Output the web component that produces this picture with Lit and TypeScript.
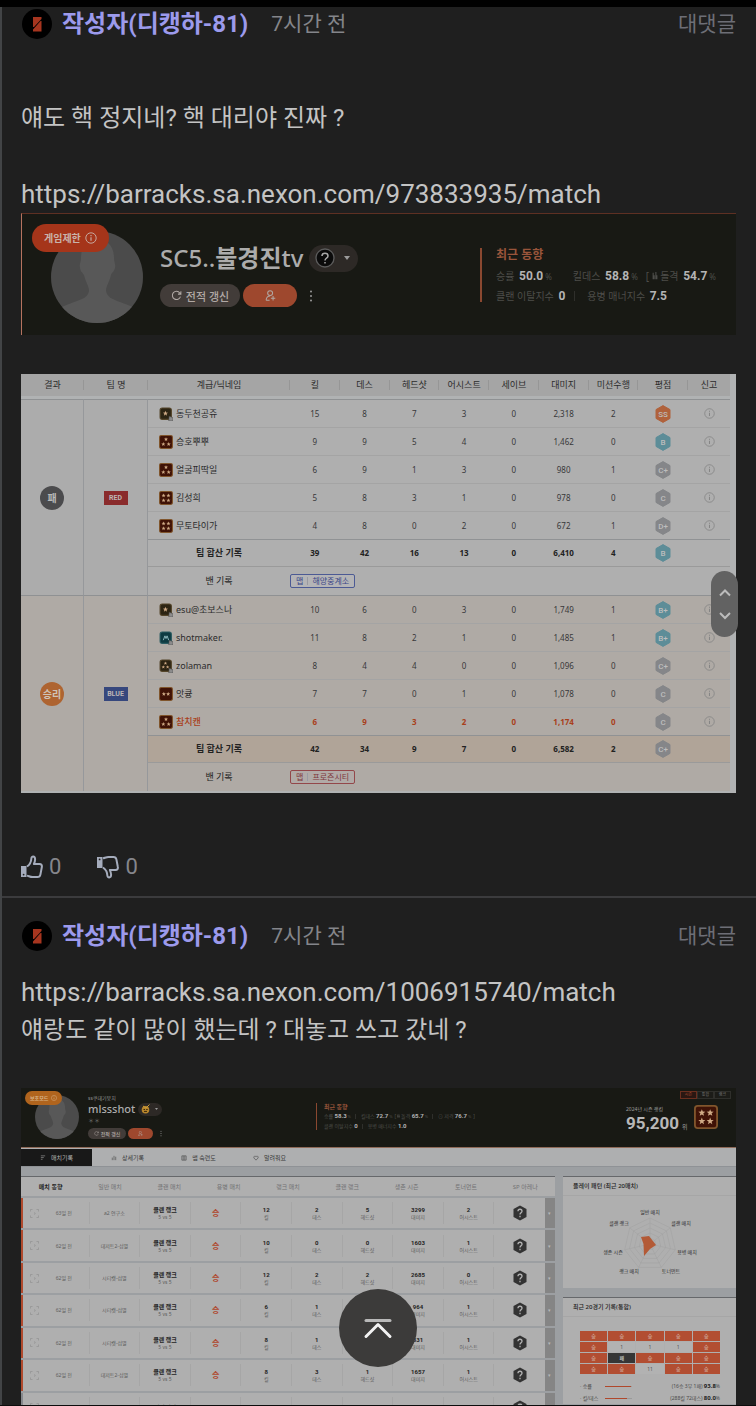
import { LitElement, html, svg, css, nothing } from "lit";
import { customElement, property } from "lit/decorators.js";
import { classMap } from "lit/directives/class-map.js";

/* ---------- shared icons ---------- */

const infoIcon = (cls = "info") => html`
  <svg class=${cls} viewBox="0 0 12 12" fill="none" stroke="currentColor" aria-hidden="true">
    <circle cx="6" cy="6" r="5.2" stroke-width="0.9" />
    <path d="M6 5.2V8.8M6 3.1V4.2" stroke-width="1.1" />
  </svg>`;

const personAvatar = (cls: string) => html`
  <svg class=${cls} viewBox="0 0 92 92" aria-hidden="true">
    <defs><clipPath id="disc"><circle cx="46" cy="46" r="46" /></clipPath></defs>
    <circle cx="46" cy="46" r="46" fill="#4b4b4b" />
    <g clip-path="url(#disc)" fill="#585858">
      <path d="M30 27C30 14 37 8 46 8S63 14 63 27C63 32 65 33 64 37 63 41 61 41 60 44 58 52 55 55 55 60 56 66 61 68 69 71 80 75 86 77 90 84V96H2V84C6 77 13 75 23 71 32 68 37 66 38 60 38 55 35 52 33 44 31 41 29 40 29 36 28 33 30 32 30 27Z" />
    </g>
  </svg>`;

const refreshIcon = html`
  <svg class="ico" viewBox="0 0 12 12" fill="none" stroke="currentColor" stroke-width="1.1" aria-hidden="true">
    <path d="M10.3 7.2A4.5 4.5 0 1 1 9.6 3.2L10.6 4.4M10.8 1.4V4.5H7.6" />
  </svg>`;

const addUserIcon = html`
  <svg class="ico" viewBox="0 0 12 12" fill="none" stroke="currentColor" stroke-width="1.1" aria-hidden="true">
    <circle cx="5.6" cy="3.4" r="2.7" />
    <path d="M1.2 11.2C1.4 8.2 3 6.6 5.6 6.6M1.2 11.2H5M8.8 6.6V11.4M6.4 9H11.2" />
  </svg>`;

const dotsIcon = html`
  <svg class="dots" viewBox="0 0 4 12" fill="currentColor" aria-hidden="true">
    <circle cx="2" cy="1.4" r="1" /><circle cx="2" cy="6" r="1" /><circle cx="2" cy="10.6" r="1" />
  </svg>`;

const star = (x: number, y: number, r: number) => {
  const pts: string[] = [];
  for (let i = 0; i < 10; i++) {
    const a = -Math.PI / 2 + (i * Math.PI) / 5;
    const d = i % 2 ? r * 0.42 : r;
    pts.push(`${(x + d * Math.cos(a)).toFixed(2)},${(y + d * Math.sin(a)).toFixed(2)}`);
  }
  return svg`<polygon points=${pts.join(" ")} fill="#d0ab86" />`;
};

const STARS: Record<number, [number, number][]> = {
  2: [[9, 13], [17, 13]],
  3: [[13, 8], [8, 17], [18, 17]],
  4: [[8.5, 8.5], [17.5, 8.5], [8.5, 17.5], [17.5, 17.5]],
};

const rankIcon = (kind: string) => {
  const n = Number(kind);
  if (n) {
    return html`<svg class="rank" viewBox="0 0 26 26" aria-hidden="true">
      <rect x="1" y="1" width="24" height="24" rx="3" fill="#3f1206" stroke="#80552c" stroke-width="2" />
      ${STARS[n].map(([x, y]) => star(x, y, 4))}
    </svg>`;
  }
  const teal = kind === "teal";
  return html`<svg class="rank" viewBox="0 0 26 26" aria-hidden="true">
    <rect x="2" y="2" width="21" height="21" rx="4" fill=${teal ? "#0e3b42" : "#2c2413"} stroke=${teal ? "#2b5c62" : "#54452a"} stroke-width="2" />
    ${teal
      ? svg`<path d="M8 17L11 9L13 14L15 9L18 17" fill="none" stroke="#9cc7cc" stroke-width="1.6"/>`
      : kind === "gold3"
        ? [star(12, 8, 3.5), star(8, 15, 3.5), star(16, 15, 3.5)]
        : star(12, 12, 5)}
    <path d="M19 17L26 20V26H18Z" fill="#8b8b8b" stroke="#4c4c4c" stroke-width="1" />
  </svg>`;
};

const GRADE_COLOR: Record<string, string> = { S: "#b0623c", B: "#5d8d98", C: "#858689", D: "#858689" };

const gradeIcon = (g: string) => html`
  <svg class="grade" viewBox="0 0 16 18" role="img" aria-label=${g}>
    <path d="M8 0.6L15 4.6V13.4L8 17.4L1 13.4V4.6Z" fill=${GRADE_COLOR[g[0]]} stroke=${GRADE_COLOR[g[0]]} stroke-linejoin="round" />
    <text x="8" y="12" text-anchor="middle" class="grade-text">${g}</text>
  </svg>`;

/* ---------- scoreboard ---------- */

type Player = { rank: string; name: string; v: string[]; grade: string; me?: boolean };
type Team = { cls: string; result: string; team: string; players: Player[]; sum: string[]; sumGrade: string; map: string };

const TEAMS: Team[] = [
  {
    cls: "red", result: "패", team: "RED", map: "해양중계소",
    players: [
      { rank: "gold", name: "동두천공쥬", v: ["15", "8", "7", "3", "0", "2,318", "2"], grade: "SS" },
      { rank: "3", name: "승호뿌뿌", v: ["9", "9", "5", "4", "0", "1,462", "0"], grade: "B" },
      { rank: "3", name: "얼굴피딱일", v: ["6", "9", "1", "3", "0", "980", "1"], grade: "C+" },
      { rank: "4", name: "김성희", v: ["5", "8", "3", "1", "0", "978", "0"], grade: "C" },
      { rank: "4", name: "무토타이가", v: ["4", "8", "0", "2", "0", "672", "1"], grade: "D+" },
    ],
    sum: ["39", "42", "16", "13", "0", "6,410", "4"], sumGrade: "B",
  },
  {
    cls: "blue", result: "승리", team: "BLUE", map: "프로즌시티",
    players: [
      { rank: "gold", name: "esu@초보스나", v: ["10", "6", "0", "3", "0", "1,749", "1"], grade: "B+" },
      { rank: "teal", name: "shotmaker.", v: ["11", "8", "2", "1", "0", "1,485", "1"], grade: "B+" },
      { rank: "gold3", name: "zolaman", v: ["8", "4", "4", "0", "0", "1,096", "0"], grade: "C+" },
      { rank: "2", name: "앗큥", v: ["7", "7", "0", "1", "0", "1,078", "0"], grade: "C" },
      { rank: "3", name: "참치캔", v: ["6", "9", "3", "2", "0", "1,174", "0"], grade: "C", me: true },
    ],
    sum: ["42", "34", "9", "7", "0", "6,582", "2"], sumGrade: "C+",
  },
];

const HEADS = ["결과", "팀 명", "계급/닉네임", "킬", "데스", "헤드샷", "어시스트", "세이브", "대미지", "미션수행", "평점", "신고"];

@customElement("score-board")
export class ScoreBoard extends LitElement {
  static styles = css`
    :host { display: block; background: #b0b2b3; padding: 0 6px 2px 0; font: 8px/12px "Noto Sans", "Noto Sans CJK KR", sans-serif; color: #38383a; }
    table { width: 100%; table-layout: fixed; border-collapse: separate; border-spacing: 0; }
    .c-result { width: 63px; }
    .c-team { width: 64px; }
    .c-name { width: 142px; }
    .c-report { width: 42px; }
    th, td { padding: 0; box-sizing: border-box; text-align: center; vertical-align: middle; }
    th { height: 25px; border-bottom: 3px solid #b0b2b3; font-weight: 400; font-size: 9px; color: #2c2c2c; background: linear-gradient(#969696, #969696) right center / 1px 10px no-repeat, #a5a5a5; white-space: nowrap; }
    th:last-child { background: #a5a5a5; }
    td { height: 28px; border-top: 1px solid #a4a4a4; }
    tr.first td { border-top-color: #8f9193; }
    tbody.red { background: #afafaf; }
    tbody.blue { background: #afaaa5; }
    tbody.red .side { background: #acacac; }
    .side { border-right: 1px solid #96989b; }
    tr.sum td { border-top-color: #909294; border-bottom: 1px solid #9a9a9a; font-weight: 700; color: #222; }
    tbody.blue tr.sum td { background: #b0a498; }
    .sum-label, .ban-label { font-size: 9px; }
    tr.ban td { border-top: 0; }
    .ban-label { color: #1f1f1f; }
    .nick { display: flex; align-items: center; gap: 3px; padding-left: 11px; font-size: 9px; color: #2c2c2c; }
    .rank { width: 14px; height: 14px; }
    .grade { width: 16px; height: 18px; display: block; margin: 0 auto; }
    .grade-text { font: 500 8px/1 "Roboto", sans-serif; fill: #bdbdbd; }
    .result { display: flex; align-items: center; justify-content: center; width: 24px; height: 24px; margin: 0 auto; border-radius: 50%; color: #b9b9b9; font-size: 10px; font-weight: 700; background: #4b4b4d; }
    .blue .result { background: #ae6431; color: #cfc3b8; }
    .team { display: block; width: 24px; margin: 0 auto; font: 700 7px/14px "Roboto", sans-serif; color: #bdb5b5; background: #8a2b2c; }
    .blue .team { background: #36477d; }
    .map { display: inline-flex; gap: 4px; align-items: center; border: 1px solid #4c5a94; border-radius: 2px; padding: 0 5px; line-height: 12px; color: #3b4788; background: #b4b4b6; }
    .map span + span { border-left: 1px solid #9a9aa2; padding-left: 4px; line-height: 8px; }
    .blue .map { border-color: #93474a; color: #7e363b; background: #b1aaa7; }
    .ban-map { text-align: left; }
    .me td { color: #a93f1b; font-weight: 700; }
    .me .nick { font-weight: 500; color: inherit; }
    .report { border: 0; padding: 0; background: none; color: #858585; display: block; margin: 0 auto; height: 12px; }
    .info { width: 11px; height: 11px; display: block; }
  `;

  render() {
    return html`<table>
      <colgroup>
        <col class="c-result" /><col class="c-team" /><col class="c-name" />
        ${Array.from({ length: 8 }, () => html`<col />`)}<col class="c-report" />
      </colgroup>
      <thead><tr>${HEADS.map((h) => html`<th scope="col">${h}</th>`)}</tr></thead>
      ${TEAMS.map((t) => html`
        <tbody class=${t.cls}>
          ${t.players.map((p, i) => html`
            <tr class=${classMap({ first: i === 0, me: !!p.me })}>
              ${i === 0
                ? html`<td class="side" rowspan="7"><span class="result">${t.result}</span></td>
                    <td class="side" rowspan="7"><span class="team">${t.team}</span></td>`
                : nothing}
              <td><span class="nick">${rankIcon(p.rank)}${p.name}</span></td>
              ${p.v.map((x) => html`<td>${x}</td>`)}
              <td>${gradeIcon(p.grade)}</td>
              <td><button class="report" aria-label="신고">${infoIcon()}</button></td>
            </tr>`)}
          <tr class="sum">
            <td class="sum-label">팀 합산 기록</td>
            ${t.sum.map((x) => html`<td>${x}</td>`)}
            <td>${gradeIcon(t.sumGrade)}</td><td></td>
          </tr>
          <tr class="ban">
            <td class="ban-label">밴 기록</td>
            <td class="ban-map" colspan="9"><span class="map"><span>맵</span><span>${t.map}</span></span></td>
          </tr>
        </tbody>`)}
    </table>`;
  }
}

/* ---------- profile banner ---------- */

const stat = (label: unknown, value: string, unit = "") =>
  html`<span class="stat">${label} <b>${value}</b>${unit ? html`<i>${unit}</i>` : nothing}</span>`;
const bar = html`<span class="sep"></span>`;
const gunIcon = html`<svg class="gun" viewBox="0 0 6 10" fill="currentColor" aria-hidden="true"><path d="M0 1H1.4V4H2.6V9H0ZM3.4 0H4.8V4H6V9H3.4Z" /></svg>`;

@customElement("profile-banner")
export class ProfileBanner extends LitElement {
  @property({ type: Boolean, reflect: true }) compact = false;

  static styles = css`
    :host { display: block; font-family: "Noto Sans", "Noto Sans CJK KR", sans-serif; }
    button { border: 0; padding: 0; margin: 0; font-family: inherit; cursor: pointer; }
    .banner { display: flex; box-sizing: border-box; height: 122px; background: #181914; border-top: 1px solid #5e3023; border-left: 1px solid #b5735f; }
    .portrait { position: relative; flex: none; width: 138px; padding: 17px 0 0 29px; box-sizing: border-box; }
    .avatar { width: 92px; height: 92px; display: block; }
    .badge { position: absolute; left: 10px; top: 10px; height: 28px; padding: 0 12px; display: flex; align-items: center; gap: 4px; border-radius: 14px; background: #a5351a; color: #c9b3ab; font-size: 10px; font-weight: 700; white-space: nowrap; }
    .info { width: 12px; height: 12px; }
    .who { padding-top: 27px; flex: 1; min-width: 0; }
    .name-row { display: flex; align-items: center; gap: 6px; height: 34px; }
    .name { margin: 0; font-size: 24px; line-height: 34px; font-weight: 500; color: #acacac; white-space: nowrap; }
    .name b { font-weight: 700; }
    .tier { display: flex; align-items: center; justify-content: space-between; width: 49px; height: 27px; box-sizing: border-box; padding: 0 8px 0 6px; border-radius: 14px; background: #2d2926; color: #9b9b9b; }
    .tier-icon { width: 20px; height: 20px; }
    .caret { width: 6px; height: 4px; }
    .actions { display: flex; align-items: center; gap: 3px; padding-top: 9px; }
    .refresh, .add { display: flex; align-items: center; justify-content: center; gap: 4px; height: 23px; border-radius: 12px; color: #b1a9a5; }
    .refresh { width: 80px; background: #423c39; font-size: 11px; font-weight: 500; white-space: nowrap; }
    .add { width: 54px; background: #9e482e; }
    .ico { width: 11px; height: 11px; }
    .more { background: none; color: #9a9a9a; padding: 0 0 0 9px; height: 14px; }
    .dots { width: 4px; height: 12px; display: block; }
    .trend { align-self: flex-start; box-sizing: border-box; flex: none; width: 256px; height: 54px; margin-top: 34px; border-left: 2px solid #8a4830; padding-left: 14px; color: #4d4d49; font-size: 10px; line-height: 20px; white-space: nowrap; }
    .trend h3 { margin: 1px 0 5px; font-size: 12px; line-height: 12px; font-weight: 700; color: #99553b; }
    .line { display: flex; align-items: center; height: 20px; }
    .stat b { font: 700 12px/20px "Roboto", sans-serif; color: #b4b4b4; margin-left: 2px; }
    .stat i { font-style: normal; font-size: 8px; margin-left: 2px; }
    .sep { width: 1px; height: 10px; margin: 0 12px 0 9px; background: #2f2f2b; }
    .open { margin: 0 3px 0 8px; }
    .gun { flex: none; width: 6px; height: 8px; margin-right: 2px; }
    .season, .clan, .sub { display: none; }

    :host([compact]) .banner { height: 60px; border: 0; border-bottom: 1px solid #8f6a58; }
    :host([compact]) .portrait { width: 67px; padding: 7px 0 0 14px; }
    :host([compact]) .avatar { width: 44px; height: 44px; }
    :host([compact]) .badge { left: 4px; top: 3px; height: 14px; padding: 0 5px; gap: 3px; border-radius: 7px; background: #b0641d; font-size: 5px; color: #d8b48b; }
    :host([compact]) .info { width: 6px; height: 6px; }
    :host([compact]) .who { padding-top: 6px; }
    :host([compact]) .clan { display: block; font-size: 5px; line-height: 8px; color: #929292; }
    :host([compact]) .sub { display: block; font-size: 6px; line-height: 10px; color: #6b6b68; }
    :host([compact]) .name-row { height: 14px; gap: 3px; }
    :host([compact]) .name { font-size: 11px; line-height: 14px; }
    :host([compact]) .tier { width: 24px; height: 13px; padding: 0 4px 0 3px; }
    :host([compact]) .tier-icon { width: 10px; height: 10px; }
    :host([compact]) .caret { width: 3px; height: 2px; }
    :host([compact]) .actions { padding-top: 2px; gap: 2px; }
    :host([compact]) .refresh, :host([compact]) .add { height: 11px; gap: 2px; border-radius: 6px; }
    :host([compact]) .refresh { width: 38px; font-size: 5px; }
    :host([compact]) .add { width: 25px; }
    :host([compact]) .ico { width: 5px; height: 5px; }
    :host([compact]) .more { padding-left: 5px; height: 7px; }
    :host([compact]) .dots { width: 2px; height: 7px; }
    :host([compact]) .trend { width: 310px; height: 27px; margin-top: 15px; padding-left: 7px; border-left-width: 1px; font-size: 5px; line-height: 10px; }
    :host([compact]) .trend h3 { font-size: 6px; line-height: 8px; margin: 0; }
    :host([compact]) .line { height: 10px; }
    :host([compact]) .stat b { font-size: 6px; line-height: 10px; margin-left: 0; }
    :host([compact]) .stat i { font-size: 4px; margin-left: 1px; }
    :host([compact]) .sep { height: 5px; margin: 0 5px 0 4px; }
    :host([compact]) .open { margin: 0 1px 0 2px; }
    :host([compact]) .gun { width: 3px; height: 4px; margin-right: 1px; }
    :host([compact]) .season { display: grid; grid-template-columns: 60px 24px; column-gap: 8px; align-content: start; flex: none; width: 110px; box-sizing: border-box; padding: 3px 6px 0 0; color: #9c9c9c; }
    .modes { grid-column: 1 / -1; display: flex; margin: 0 0 6px 54px; }
    .modes button { flex: none; width: 17px; height: 8px; box-sizing: border-box; border: 1px solid #2f2f2b; background: #1c1c18; color: #777; font-size: 4px; line-height: 6px; }
    .modes .on { border-color: #6a2f1f; color: #a8492d; background: #2a1712; }
    .season-label { font-size: 5px; line-height: 8px; }
    .season-rank { display: flex; align-items: baseline; gap: 3px; font-size: 6px; line-height: 20px; }
    .season-rank b { font: 700 17px/20px "Roboto", sans-serif; color: #b8b8b8; }
    .rank { grid-column: 2; grid-row: 2 / span 2; width: 24px; height: 24px; }
  `;

  render() {
    const c = this.compact;
    return html`
      <div class="banner">
        <div class="portrait">
          ${personAvatar("avatar")}
          <span class="badge">${c ? "보호모드" : "게임제한"}${infoIcon()}</span>
        </div>
        <div class="who">
          ${c ? html`<div class="clan">ss쿠데기뭉치</div>` : nothing}
          <div class="name-row">
            <h2 class="name">${c ? "mlssshot" : html`SC5..<b>불경진</b>tv`}</h2>
            <button class="tier" aria-label="계급">
              ${c
                ? html`<svg class="tier-icon" viewBox="0 0 10 10"><circle cx="4.5" cy="5.8" r="3.8" fill="#b8862c" /><path d="M2 2L5 4L8.5 0.5" stroke="#c99c3c" fill="none" /><path d="M2.5 5.5H4M5.2 5.5H6.7M3 7.4H6" stroke="#2a1d08" stroke-width="0.9" /></svg>`
                : html`<svg class="tier-icon" viewBox="0 0 20 20"><circle cx="10" cy="10" r="9" fill="#0b0b0b" stroke="#5c5c5c" stroke-width="1.3" /><path d="M7 8C7 4.4 13 4.4 13 8C13 10.2 10 10 10 12.4M10 14V15.6" fill="none" stroke="#a8a8a8" stroke-width="1.5" /></svg>`}
              <svg class="caret" viewBox="0 0 6 4" fill="currentColor"><path d="M0 0H6L3 4Z" /></svg>
            </button>
          </div>
          ${c ? html`<div class="sub">＊＊</div>` : nothing}
          <div class="actions">
            <button class="refresh">${refreshIcon}전적 갱신</button>
            <button class="add" aria-label="친구 추가">${addUserIcon}</button>
            <button class="more" aria-label="더보기">${dotsIcon}</button>
          </div>
        </div>
        <section class="trend">
          <h3>최근 동향</h3>
          ${c
            ? html`<div class="line">${stat("승률", "58.3", "%")}${bar}${stat("킬데스", "72.7", "%")}<span class="open">[</span>${gunIcon}${stat("돌격", "65.7", "%")}${bar}${stat("⊙ 저격", "76.7", "%")}<span class="open">]</span></div>
                <div class="line">${stat("클랜 이탈지수", "0")}${bar}${stat("용병 매너지수", "1.0")}</div>`
            : html`<div class="line">${stat("승률", "50.0", "%")}${bar}${stat("킬데스", "58.8", "%")}<span class="open">[</span>${gunIcon}${stat("돌격", "54.7", "%")}${bar}</div>
                <div class="line">${stat("클랜 이탈지수", "0")}${bar}${stat("용병 매너지수", "7.5")}</div>`}
        </section>
        ${c
          ? html`<div class="season">
              <div class="modes"><button class="on">시즌</button><button>통합</button><button>랭크</button></div>
              <span class="season-label">2024년 시즌 랭킹</span>
              <span class="season-rank"><b>95,200</b>위</span>
              ${rankIcon("4")}
            </div>`
          : nothing}
      </div>`;
  }
}

/* ---------- match history ---------- */

type Match = [string, string, string, string, string, string, string, string, string, string];
const MATCHES: Match[] = [
  ["63일 전", "a2 연구소", "클랜 랭크", "5 vs 5", "승", "12", "2", "5", "3299", "2"],
  ["62일 전", "데저트2-섬멸", "클랜 랭크", "5 vs 5", "승", "10", "0", "0", "1603", "1"],
  ["62일 전", "시티캣-섬멸", "클랜 랭크", "5 vs 5", "승", "12", "2", "2", "2685", "0"],
  ["62일 전", "시티캣-섬멸", "클랜 랭크", "5 vs 5", "승", "6", "1", "2", "964", "1"],
  ["62일 전", "시티캣-섬멸", "클랜 랭크", "5 vs 5", "승", "8", "1", "3", "831", "1"],
  ["62일 전", "데저트2-섬멸", "클랜 랭크", "5 vs 5", "승", "8", "3", "1", "1657", "1"],
  ["", "", "일반매치", "", "", "30", "7", "14", "0", "0"],
];
const CATS = ["매치 동향", "일반 매치", "클랜 매치", "용병 매치", "랭크 매치", "클랜 랭크", "생존 시즌", "토너먼트", "SP 아레나"];
const LABELS = ["킬", "데스", "헤드샷", "대미지", "어시스트"];
const RESULTS = ["승", "승", "승", "승", "승", "승", "1", "1", "1", "승", "승", "패", "승", "승", "승", "승", "승", "11", "승", "승"];
const AXES: [string, number, number][] = [
  ["일반 매치", 87, 18], ["클랜 매치", 118, 29], ["용병 매치", 124, 58], ["토너먼트", 108, 77],
  ["랭크 매치", 66, 77], ["생존 시즌", 50, 58], ["클랜 랭크", 56, 29],
];

const ring = (r: number) =>
  Array.from({ length: 7 }, (_, i) => {
    const a = -Math.PI / 2 + (i * 2 * Math.PI) / 7;
    return `${(87 + r * Math.cos(a)).toFixed(1)},${(48 + r * Math.sin(a)).toFixed(1)}`;
  }).join(" ");

const TAB_ICONS = [
  svg`<path d="M1 1H6M1 3H4.4M1 5H3"/>`,
  svg`<path d="M1.5 6V3M3.5 6V1M5.5 6V2"/>`,
  svg`<path d="M1 1H6V6H1ZM2.6 1V6M4.4 1V6"/>`,
  svg`<path d="M3.5 6L1 3.4C0.4 1.4 2.6 0.6 3.5 2.2C4.4 0.6 6.6 1.4 6 3.4Z"/>`,
];

@customElement("match-history")
export class MatchHistory extends LitElement {
  static styles = css`
    :host { display: block; background: #9c9fa2; font: 5px/8px "Noto Sans", "Noto Sans CJK KR", sans-serif; color: #4a4a4a; }
    button { border: 0; padding: 0; margin: 0; background: none; font: inherit; color: inherit; }
    .tabs { display: flex; height: 19px; background: #aeafb0; border-bottom: 1px solid #8f9296; padding-top: 1px; box-sizing: border-box; }
    .tabs button { width: 71px; display: flex; align-items: center; justify-content: center; gap: 5px; font-size: 6px; color: #3a3a3a; }
    .tabs .on { background: #181818; color: #b3b3b3; }
    .tabs svg { width: 6px; height: 6px; fill: none; stroke: currentColor; stroke-width: 0.9; opacity: 0.7; }
    .body { display: grid; grid-template-columns: minmax(0, 534fr) minmax(0, 173fr); gap: 8px; padding-top: 9px; }
    .cats { display: grid; grid-template-columns: repeat(9, 1fr); height: 20px; box-sizing: border-box; border-top: 1px solid #66686b; background: #afafaf; }
    .cats button { font-size: 6px; color: #727274; }
    .cats .on { color: #1f1f1f; font-weight: 700; }
    .rows { display: grid; grid-template-rows: repeat(7, 1fr); gap: 2px; height: 225px; margin-top: 2px; }
    .row { display: grid; grid-template-columns: 16px repeat(10, minmax(0, 1fr)) 10px; align-items: center; background: #afafaf; border-left: 2px solid #b04a2d; text-align: center; }
    .row.lose { border-left-color: #85888c; }
    .cell { border-right: 1px solid #a6a6a6; height: 22px; display: flex; flex-direction: column; align-items: center; justify-content: center; white-space: nowrap; color: #5d5d5d; }
    .cell.plain { border-right: 0; }
    .cell b { font-size: 6px; line-height: 8px; font-weight: 700; color: #242424; }
    .cell .num { font-family: "Roboto", sans-serif; }
    .cell span { line-height: 6px; }
    .cell .win { font-size: 8px; font-weight: 700; color: #b0452a; line-height: 10px; }
    .play { justify-self: end; width: 9px; height: 9px; }
    .play svg { display: block; width: 9px; height: 9px; fill: none; stroke: #919191; stroke-width: 0.7; }
    .hex { width: 14px; height: 16px; }
    .toggle { align-self: stretch; background: #858585; color: #b9b9b9; font-size: 5px; }
    .panel { background: #afafaf; border-top: 1px solid #66686b; }
    .panel h3 { margin: 0; padding: 0 10px; font-size: 6px; line-height: 18px; font-weight: 500; color: #222; border-bottom: 1px solid #a6a6a6; }
    .radar { display: block; width: 100%; height: 92px; }
    .radar text { font: 5px "Noto Sans CJK KR", sans-serif; fill: #2c2c2c; }
    .side { display: flex; flex-direction: column; gap: 9px; }
    .results { display: grid; grid-template-columns: repeat(5, 1fr); gap: 1px; margin: 14px 16px 6px 17px; }
    .res { height: 10px; line-height: 10px; text-align: center; font-weight: 700; background: #b24e32; color: #d0a99c; }
    .res.draw { background: #b2b2b2; color: #555; font-weight: 400; }
    .res.loss { background: #363636; color: #bbb; }
    .meter { display: grid; grid-template-columns: 25px 27px 1fr; align-items: center; margin: 0 16px 0 17px; height: 12px; }
    .track { height: 1px; background: #9a9a9a; }
    .fill { height: 1px; background: #b0482c; }
    .value { text-align: right; }
    .value b { color: #222; font-size: 6px; }
  `;

  render() {
    return html`
      <nav class="tabs">
        ${["매치기록", "상세기록", "맵 숙련도", "알려줘요"].map((t, i) => html`
          <button class=${i === 0 ? "on" : ""}><svg viewBox="0 0 7 7">${TAB_ICONS[i]}</svg>${t}</button>`)}
      </nav>
      <div class="body">
        <section>
          <nav class="cats">${CATS.map((c, i) => html`<button class=${i === 0 ? "on" : ""}>${c}</button>`)}</nav>
          <div class="rows">
            ${MATCHES.map((m) => html`
              <div class=${classMap({ row: true, lose: !m[4] })}>
                <button class="play" aria-label="재생"><svg viewBox="0 0 9 9"><path d="M0.5 2.5V0.5H2.5M6.5 0.5H8.5V2.5M8.5 6.5V8.5H6.5M2.5 8.5H0.5V6.5M4 3.5L5.4 4.5L4 5.5" /></svg></button>
                <div class="cell">${m[0]}</div>
                <div class="cell">${m[1]}</div>
                <div class="cell"><b>${m[2]}</b><span>${m[3]}</span></div>
                <div class="cell"><span class="win">${m[4]}</span></div>
                ${LABELS.map((l, i) => html`<div class="cell"><b class="num">${m[5 + i]}</b>${m[3] ? html`<span>${l}</span>` : nothing}</div>`)}
                <div class="cell plain"><svg class="hex" viewBox="0 0 14 16"><path d="M7 0.5L13.5 4V12L7 15.5L0.5 12V4Z" fill="#333" /><path d="M5 6.2C5 3.6 9 3.6 9 6.2C9 7.9 7 7.8 7 9.6M7 10.8V12.2" fill="none" stroke="#b3b3b3" stroke-width="1.3" /></svg></div>
                <button class="toggle" aria-label="펼치기">▾</button>
              </div>`)}
          </div>
        </section>
        <div class="side">
          <section class="panel">
            <h3>플레이 패턴 (최근 20매치)</h3>
            <svg class="radar" viewBox="0 0 173 92">
              <g fill="none" stroke="#a0a0a0" stroke-width="0.5">
                ${[26, 21, 16, 11, 6].map((r) => svg`<polygon points=${ring(r)} />`)}
                ${ring(26).split(" ").map((p) => svg`<path d=${`M87 48L${p.replace(",", " ")}`} />`)}
              </g>
              <path d="M78 41L86 40L93 49L87 53L81 60L80.5 48Z" fill="#b35a36" />
              ${AXES.map(([t, x, y]) => svg`<text x=${x} y=${y} text-anchor="middle">${t}</text>`)}
            </svg>
          </section>
          <section class="panel">
            <h3>최근 20경기 기록(통합)</h3>
            <div class="results">${RESULTS.map((r) => html`<div class=${classMap({ res: true, draw: r.startsWith("1"), loss: r === "패" })}>${r}</div>`)}</div>
            <div class="meter"><span>· 승률</span><div class="track"><div class="fill" style="width:95%"></div></div><span class="value">(16승 3무 1패) <b>93.8</b>%</span></div>
            <div class="meter"><span>· 킬/데스</span><div class="track"><div class="fill" style="width:80%"></div></div><span class="value">(288킬 72데스) <b>80.0</b>%</span></div>
          </section>
        </div>
      </div>`;
  }
}

/* ---------- page ---------- */

@customElement("app-root")
export class AppRoot extends LitElement {
  static styles = css`
    :host { display: block; height: 100vh; overflow: hidden; box-sizing: border-box; border-top: 7px solid #000; border-bottom: 1px solid #0c0c0c; background: #1f1f1f; color: #c4c4c4; font: 24px/38px "Roboto", "Noto Sans CJK KR", sans-serif; }
    .feed { border-left: 2px solid #424446; }
    .comment { padding: 0 20px 12px 19px; }
    .comment + .comment { border-top: 2px solid #3b3b3d; padding-top: 21px; }
    .head { display: flex; align-items: center; height: 34px; margin-bottom: 20px; white-space: nowrap; }
    .face { width: 30px; height: 30px; margin: 0 10px 0 1px; }
    .author { font-size: 24px; font-weight: 700; color: #9c9aec; }
    .time { font-size: 21px; color: #84858a; margin-left: 23px; }
    .reply { margin-left: auto; border: 0; padding: 0; background: none; font: inherit; font-size: 21px; color: #6d6e76; }
    .text { margin: 0; overflow-wrap: anywhere; }
    .text.late { padding-top: 38px; }
    .text a { display: block; height: 38px; font-size: 26px; color: inherit; text-decoration: none; }
    .attach { display: block; }
    .attach.spaced { margin-top: 39px; }
    .votes { display: flex; gap: 36px; margin-top: 57px; }
    .vote { display: flex; align-items: center; gap: 6px; border: 0; padding: 0; background: none; color: #85868c; font: 22px/34px "Roboto", sans-serif; }
    .vote svg { width: 22px; height: 24px; color: #a5acbc; }
    .jump { position: fixed; z-index: 2; right: 18px; top: 571px; width: 27px; height: 66px; border-radius: 14px; background: #626262; display: flex; flex-direction: column; align-items: center; justify-content: center; gap: 10px; }
    .jump button { border: 0; padding: 0; background: none; height: 13px; display: block; }
    .jump svg { width: 14px; height: 13px; display: block; }
    .top { position: fixed; z-index: 2; left: 50%; bottom: 39px; width: 78px; height: 78px; margin-left: -39px; border: 0; padding: 0; border-radius: 50%; background: #3c3b3a; display: flex; align-items: center; justify-content: center; }
    .top svg { width: 30px; height: 24px; }
  `;

  private head() {
    return html`<header class="head">
      <svg class="face" viewBox="0 0 30 30" aria-hidden="true">
        <circle cx="15" cy="15" r="15" fill="#000" />
        <path d="M11 8H19.5V10L12 18H11ZM19.5 12V22.5H11V20.5L18.6 12Z" fill="#a6351f" />
      </svg>
      <span class="author">작성자(디캥하-81)</span>
      <span class="time">7시간 전</span>
      <button class="reply">대댓글</button>
    </header>`;
  }

  render() {
    const thumb = svg`<path d="M0 11H5.5V22H0Z" fill="currentColor" /><path d="M6 11.5C9 9.5 10.2 7 10.4 3.2C10.5 1 13.9 0.8 14.1 4C14.2 6 13.5 7.6 12.9 9H18.5C20.4 9 21.2 10.4 20.8 12.2L19.4 19.6C19 21.4 18 22 16.6 22H11.5C9.5 22 8.2 21.2 6 20.6" fill="none" stroke="currentColor" stroke-width="2" stroke-linejoin="round" /><circle cx="2.6" cy="19.6" r="0.9" fill="#1f1f1f" />`;
    return html`
      <main class="feed">
        <article class="comment">
          ${this.head()}
          <p class="text late">얘도 핵 정지네? 핵 대리야 진짜 ?</p>
          <p class="text late"><a href="https://barracks.sa.nexon.com/973833935/match">https://barracks.sa.nexon.com/973833935/match</a></p>
          <profile-banner class="attach"></profile-banner>
          <score-board class="attach spaced"></score-board>
          <div class="votes">
            <button class="vote" aria-label="추천"><svg viewBox="0 0 22 24">${thumb}</svg>0</button>
            <button class="vote" aria-label="비추천"><svg viewBox="0 0 22 24"><g transform="matrix(1 0 0 -1 0 24)">${thumb}</g></svg>0</button>
          </div>
        </article>
        <article class="comment">
          ${this.head()}
          <p class="text"><a href="https://barracks.sa.nexon.com/1006915740/match">https://barracks.sa.nexon.com/1006915740/match</a>얘랑도 같이 많이 했는데 ? 대놓고 쓰고 갔네 ?</p>
          <profile-banner class="attach spaced" compact></profile-banner>
          <match-history class="attach"></match-history>
        </article>
      </main>
      <div class="jump">
        <button aria-label="위로"><svg viewBox="0 0 14 13" fill="none" stroke="#bcbcbc" stroke-width="2"><path d="M2 9.5L7 4.5L12 9.5" /></svg></button>
        <button aria-label="아래로"><svg viewBox="0 0 14 13" fill="none" stroke="#bcbcbc" stroke-width="2"><path d="M2 4L7 9L12 4" /></svg></button>
      </div>
      <button class="top" aria-label="맨 위로">
        <svg viewBox="0 0 30 24" fill="none" stroke-linecap="round" stroke-linejoin="round">
          <path d="M3 20.5L15 8.5L27 20.5" stroke="#f2f2f2" stroke-width="3" />
          <path d="M3 4.5H27" stroke="#b9b9b9" stroke-width="3" />
        </svg>
      </button>`;
  }
}
